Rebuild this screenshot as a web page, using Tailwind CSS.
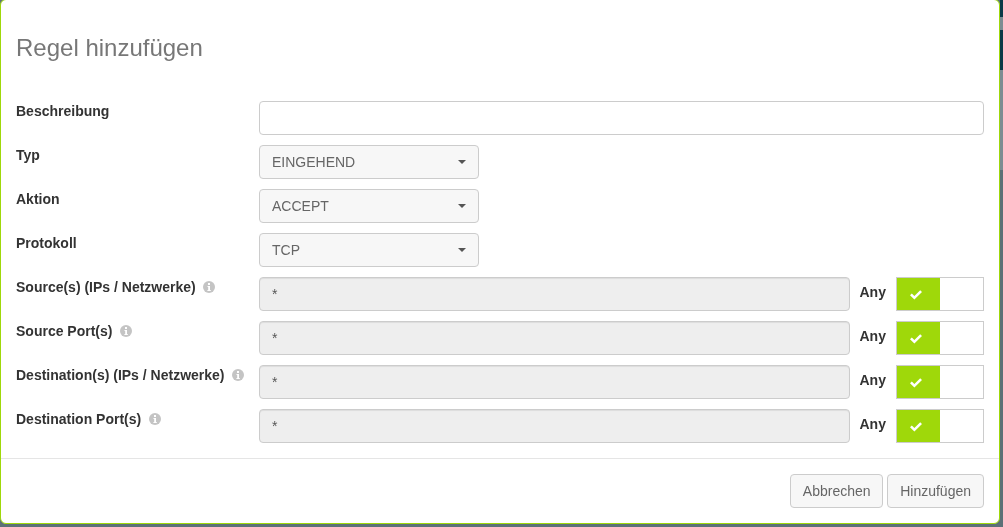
<!DOCTYPE html>
<html lang="de">

<head>
    <meta charset="UTF-8">
    <title>Regel hinzufügen</title>
    <script src="https://cdn.jsdelivr.net/npm/@tailwindcss/browser@4"></script>
</head>

<body class="w-[1003px] h-[527px] overflow-hidden bg-[#5c7077] font-['Liberation_Sans',sans-serif] text-sm text-[#333]">
    <div class="flex">
        <div class="w-[1000px] h-[525px] -mt-px bg-white border border-[#9fd80a] rounded-md flex flex-col shrink-0 will-change-transform">
            <h4 class="px-[15px] pt-[33px] h-[101px] text-2xl leading-[30px] text-[#777]">Regel hinzufügen</h4>

            <div class="px-[15px] flex flex-col gap-[10px] h-[358px] border-b border-[#e5e5e5]">
                <div class="flex">
                    <label class="w-[243px] font-bold leading-5">Beschreibung</label>
                    <input type="text" class="flex-1 h-[34px] px-3 bg-white border border-[#ccc] rounded">
                </div>
                <div class="flex">
                    <label class="w-[243px] font-bold leading-5">Typ</label>
                    <div class="w-[220px] h-[34px] px-3 flex items-center justify-between bg-[#f7f7f7] border border-[#ccc] rounded text-[#666]">
                        EINGEHEND
                        <span class="border-x-4 border-x-transparent border-t-4 border-t-[#555]"></span>
                    </div>
                </div>
                <div class="flex">
                    <label class="w-[243px] font-bold leading-5">Aktion</label>
                    <div class="w-[220px] h-[34px] px-3 flex items-center justify-between bg-[#f7f7f7] border border-[#ccc] rounded text-[#666]">
                        ACCEPT
                        <span class="border-x-4 border-x-transparent border-t-4 border-t-[#555]"></span>
                    </div>
                </div>
                <div class="flex">
                    <label class="w-[243px] font-bold leading-5">Protokoll</label>
                    <div class="w-[220px] h-[34px] px-3 flex items-center justify-between bg-[#f7f7f7] border border-[#ccc] rounded text-[#666]">
                        TCP
                        <span class="border-x-4 border-x-transparent border-t-4 border-t-[#555]"></span>
                    </div>
                </div>

                <div class="flex">
                    <label class="w-[243px] font-bold leading-5 flex items-start gap-2">Source(s) (IPs / Netzwerke)
                        <svg class="w-3 h-3 mt-1 ml-[-1px]" viewBox="0 0 12 12"><circle cx="6" cy="6" r="6" fill="#c4c4c4"/><rect x="5" y="2" width="2" height="2" fill="#fff"/><path d="M4.5 5H7v4h.8v1H4.4V9h.8V6h-.7z" fill="#fff"/></svg>
                    </label>
                    <div class="w-[591px] h-[34px] px-3 flex items-center bg-[#eee] border border-[#ccc] rounded text-[#555] shadow-[inset_0_1px_1px_rgba(0,0,0,0.075)]">*</div>
                    <span class="w-[46px] pl-[9.5px] pt-[5px] font-bold leading-5">Any</span>
                    <div class="w-[88px] h-[34px] border border-[#ccc] flex">
                        <div class="w-[43px] pr-[5px] pt-px bg-[#9fd80a] flex items-center justify-center">
                            <svg class="w-3 h-[10px]" viewBox="0 0 12 10"><path d="M0 5.2 1.8 3.4 4.4 6 10.2.2 12 2 4.4 9.6z" fill="#fff"/></svg>
                        </div>
                    </div>
                </div>
                <div class="flex">
                    <label class="w-[243px] font-bold leading-5 flex items-start gap-2">Source Port(s)
                        <svg class="w-3 h-3 mt-1" viewBox="0 0 12 12"><circle cx="6" cy="6" r="6" fill="#c4c4c4"/><rect x="5" y="2" width="2" height="2" fill="#fff"/><path d="M4.5 5H7v4h.8v1H4.4V9h.8V6h-.7z" fill="#fff"/></svg>
                    </label>
                    <div class="w-[591px] h-[34px] px-3 flex items-center bg-[#eee] border border-[#ccc] rounded text-[#555] shadow-[inset_0_1px_1px_rgba(0,0,0,0.075)]">*</div>
                    <span class="w-[46px] pl-[9.5px] pt-[5px] font-bold leading-5">Any</span>
                    <div class="w-[88px] h-[34px] border border-[#ccc] flex">
                        <div class="w-[43px] pr-[5px] pt-px bg-[#9fd80a] flex items-center justify-center">
                            <svg class="w-3 h-[10px]" viewBox="0 0 12 10"><path d="M0 5.2 1.8 3.4 4.4 6 10.2.2 12 2 4.4 9.6z" fill="#fff"/></svg>
                        </div>
                    </div>
                </div>
                <div class="flex">
                    <label class="w-[243px] font-bold leading-5 flex items-start gap-2">Destination(s) (IPs / Netzwerke)
                        <svg class="w-3 h-3 mt-1 ml-[-1px]" viewBox="0 0 12 12"><circle cx="6" cy="6" r="6" fill="#c4c4c4"/><rect x="5" y="2" width="2" height="2" fill="#fff"/><path d="M4.5 5H7v4h.8v1H4.4V9h.8V6h-.7z" fill="#fff"/></svg>
                    </label>
                    <div class="w-[591px] h-[34px] px-3 flex items-center bg-[#eee] border border-[#ccc] rounded text-[#555] shadow-[inset_0_1px_1px_rgba(0,0,0,0.075)]">*</div>
                    <span class="w-[46px] pl-[9.5px] pt-[5px] font-bold leading-5">Any</span>
                    <div class="w-[88px] h-[34px] border border-[#ccc] flex">
                        <div class="w-[43px] pr-[5px] pt-px bg-[#9fd80a] flex items-center justify-center">
                            <svg class="w-3 h-[10px]" viewBox="0 0 12 10"><path d="M0 5.2 1.8 3.4 4.4 6 10.2.2 12 2 4.4 9.6z" fill="#fff"/></svg>
                        </div>
                    </div>
                </div>
                <div class="flex">
                    <label class="w-[243px] font-bold leading-5 flex items-start gap-2">Destination Port(s)
                        <svg class="w-3 h-3 mt-1" viewBox="0 0 12 12"><circle cx="6" cy="6" r="6" fill="#c4c4c4"/><rect x="5" y="2" width="2" height="2" fill="#fff"/><path d="M4.5 5H7v4h.8v1H4.4V9h.8V6h-.7z" fill="#fff"/></svg>
                    </label>
                    <div class="w-[591px] h-[34px] px-3 flex items-center bg-[#eee] border border-[#ccc] rounded text-[#555] shadow-[inset_0_1px_1px_rgba(0,0,0,0.075)]">*</div>
                    <span class="w-[46px] pl-[9.5px] pt-[5px] font-bold leading-5">Any</span>
                    <div class="w-[88px] h-[34px] border border-[#ccc] flex">
                        <div class="w-[43px] pr-[5px] pt-px bg-[#9fd80a] flex items-center justify-center">
                            <svg class="w-3 h-[10px]" viewBox="0 0 12 10"><path d="M0 5.2 1.8 3.4 4.4 6 10.2.2 12 2 4.4 9.6z" fill="#fff"/></svg>
                        </div>
                    </div>
                </div>
            </div>

            <div class="flex justify-end gap-1 pt-[15px] pr-[15px] text-[#666]">
                <button class="w-[93px] h-[34px] bg-[#f7f7f7] border border-[#ccc] rounded">Abbrechen</button>
                <button class="h-[34px] px-3 bg-[#f7f7f7] border border-[#ccc] rounded">Hinzufügen</button>
            </div>
        </div>
        <div class="flex-1 flex flex-col">
            <div class="h-[17px] bg-[#0a3a48]"></div>
            <div class="h-[13px] bg-[#7c8c92]"></div>
            <div class="h-[40px] bg-[#0a3a48]"></div>
            <div class="h-[100px] bg-[#7c8c92]"></div>
        </div>
    </div>
</body>

</html>
